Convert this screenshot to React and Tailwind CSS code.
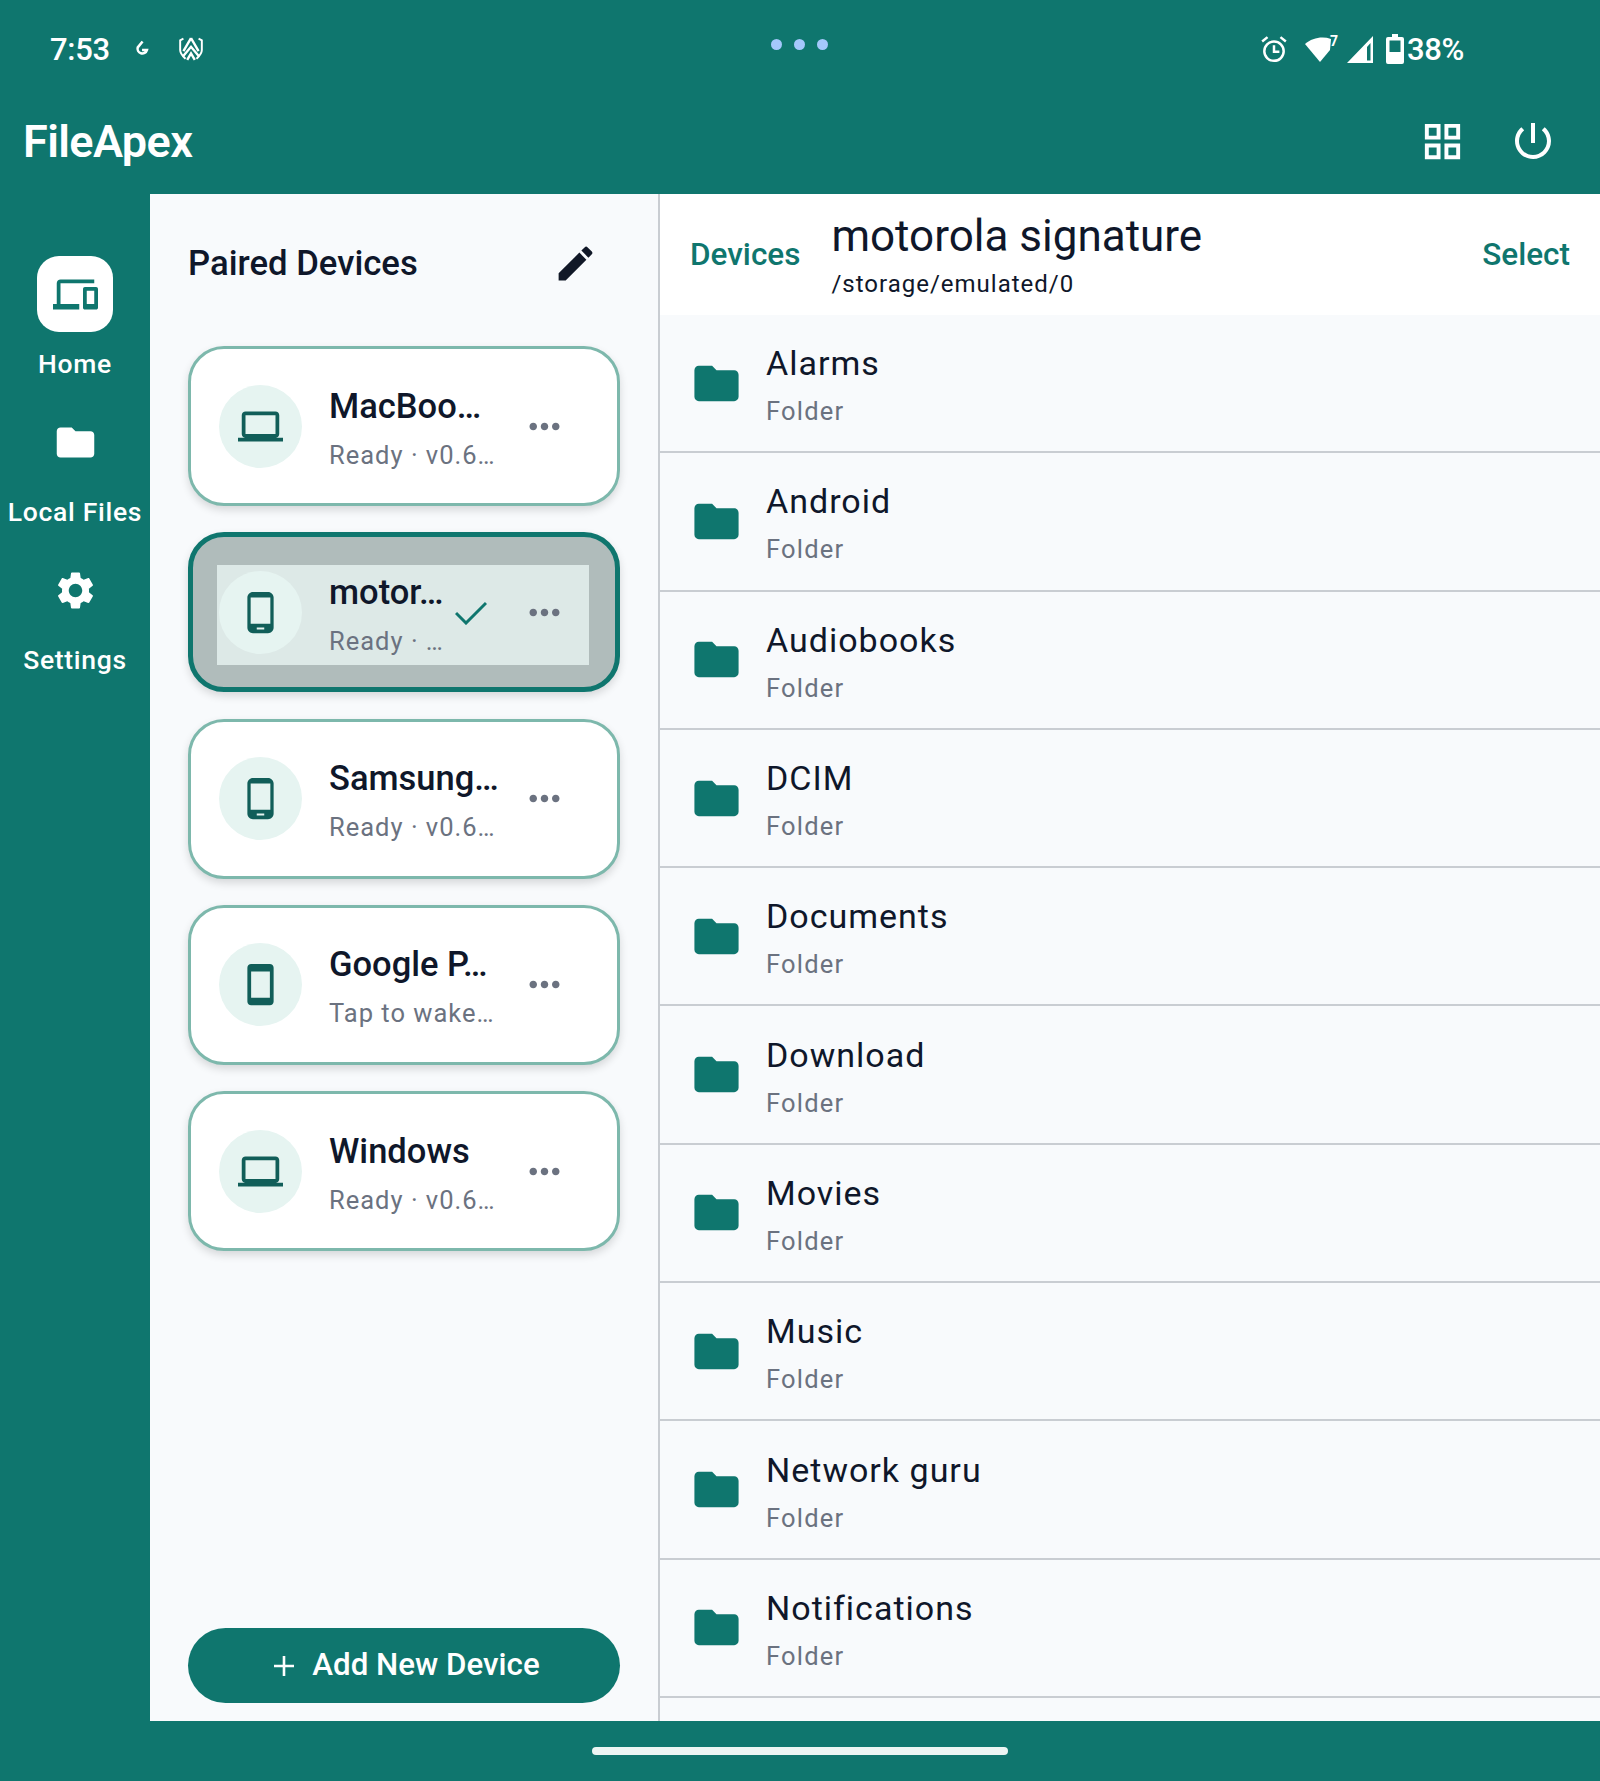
const folderPath = 'M10 4H4c-1.1 0-2 .9-2 2v12c0 1.1.9 2 2 2h16c1.1 0 2-.9 2-2V8c0-1.1-.9-2-2-2h-8l-2-2z';
const laptopPath = 'M20 18c1.1 0 1.99-.9 1.99-2L22 6c0-1.1-.9-2-2-2H4c-1.1 0-2 .9-2 2v10c0 1.1.9 2 2 2H0v2h24v-2h-4zM4 6h16v10H4V6z';
const phonePath = 'M16 1H8C6.34 1 5 2.34 5 4v16c0 1.66 1.34 3 3 3h8c1.66 0 3-1.34 3-3V4c0-1.66-1.34-3-3-3zm-2 20h-4v-1h4v1zm3.25-3H6.75V4h10.5v14z';
const tabletPath = 'M17 1.01 7 1c-1.1 0-2 .9-2 2v18c0 1.1.9 2 2 2h10c1.1 0 2-.9 2-2V3c0-1.1-.9-1.99-2-1.99zM17 19H7V5h10v14z';
const devicesPath = 'M4 6h18V4H4c-1.1 0-2 .9-2 2v11H0v3h14v-3H4V6zm19 2h-6c-.55 0-1 .45-1 1v10c0 .55.45 1 1 1h6c.55 0 1-.45 1-1V9c0-.55-.45-1-1-1zm-1 9h-4v-7h4v7z';
const gearPath = 'M19.14 12.94c.04-.3.06-.61.06-.94 0-.32-.02-.64-.07-.94l2.03-1.58c.18-.14.23-.41.12-.61l-1.92-3.32c-.12-.22-.37-.29-.59-.22l-2.39.96c-.5-.38-1.03-.7-1.62-.94l-.36-2.54c-.04-.24-.24-.41-.48-.41h-3.84c-.24 0-.43.17-.47.41l-.36 2.54c-.59.24-1.13.57-1.62.94l-2.39-.96c-.22-.08-.47 0-.59.22L2.74 8.87c-.12.21-.08.47.12.61l2.03 1.58c-.05.3-.09.63-.09.94s.02.64.07.94l-2.03 1.58c-.18.14-.23.41-.12.61l1.92 3.32c.12.22.37.29.59.22l2.39-.96c.5.38 1.03.7 1.62.94l.36 2.54c.05.24.24.41.48.41h3.84c.24 0 .44-.17.47-.41l.36-2.54c.59-.24 1.13-.56 1.62-.94l2.39.96c.22.08.47 0 .59-.22l1.92-3.32c.12-.22.07-.47-.12-.61l-2.01-1.58zM12 15.6c-1.98 0-3.6-1.62-3.6-3.6s1.62-3.6 3.6-3.6 3.6 1.62 3.6 3.6-1.62 3.6-3.6 3.6z';
const editPath = 'M3 17.25V21h3.75L17.81 9.94l-3.75-3.75L3 17.25zM20.71 7.04c.39-.39.39-1.02 0-1.41l-2.34-2.34c-.39-.39-1.02-.39-1.41 0l-1.83 1.83 3.75 3.75 1.83-1.83z';
const morePath = 'M6 10c-1.1 0-2 .9-2 2s.9 2 2 2 2-.9 2-2-.9-2-2-2zm12 0c-1.1 0-2 .9-2 2s.9 2 2 2 2-.9 2-2-.9-2-2-2zm-6 0c-1.1 0-2 .9-2 2s.9 2 2 2 2-.9 2-2-.9-2-2-2z';
const gridPath = 'M3 3v8h8V3H3zm6 6H5V5h4v4zm-6 4v8h8v-8H3zm6 6H5v-4h4v4zm4-16v8h8V3h-8zm6 6h-4V5h4v4zm-6 4v8h8v-8h-8zm6 6h-4v-4h4v4z';
const powerPath = 'M13 3h-2v10h2V3zm4.83 2.17l-1.42 1.42C17.99 7.86 19 9.81 19 12c0 3.87-3.13 7-7 7s-7-3.13-7-7c0-2.19 1.01-4.14 2.58-5.42L6.17 5.17C4.23 6.82 3 9.26 3 12c0 4.97 4.03 9 9 9s9-4.03 9-9c0-2.74-1.23-5.18-3.17-6.83z';

function Icon({ d, className }) {
  return (
    <svg viewBox="0 0 24 24" fill="currentColor" className={className}>
      <path d={d} />
    </svg>
  );
}

const devices = [
  { name: 'MacBoo…', sub: 'Ready · v0.6…', icon: laptopPath },
  { name: 'motor…', sub: 'Ready · …', icon: phonePath, active: true },
  { name: 'Samsung…', sub: 'Ready · v0.6…', icon: phonePath },
  { name: 'Google P…', sub: 'Tap to wake…', icon: tabletPath },
  { name: 'Windows', sub: 'Ready · v0.6…', icon: laptopPath },
];

const folders = ['Alarms', 'Android', 'Audiobooks', 'DCIM', 'Documents', 'Download', 'Movies', 'Music', 'Network guru', 'Notifications'];

function StatusBar() {
  return (
    <div className="grid h-[94px] grid-cols-3 items-center pt-[4px] text-white">
      <div className="flex items-center pl-[50px]">
        <span className="text-[31px] font-medium leading-none tracking-[-0.3px]">7:53</span>
        <svg viewBox="0 0 14 16" className="ml-[24px] h-[18px] w-[15px]" fill="none" stroke="currentColor" strokeWidth="2.4">
          <path d="M8 1 3.500 6.500A4.400 4.400 0 1 0 12 9H7.500" />
        </svg>
        <svg viewBox="0 0 24 24" className="ml-[29px] h-[26px] w-[26px]" fill="none" stroke="currentColor" strokeWidth="1.8">
          <path d="M5 2.500 2 4v9c0 4 4 7 5 8M19 2.500 22 4v9c0 4-4 7-5 8" />
          <path d="M12 2 5 14M12 2l7 12M4.500 19 12 10l7.500 9M8.500 22 12 16l3.500 6" strokeWidth="2.200" />
        </svg>
      </div>
      <div className="mb-[10px] flex items-center justify-center gap-[12px]">
        <span className="h-[11px] w-[11px] rounded-full bg-[#a4c8fb]" />
        <span className="h-[11px] w-[11px] rounded-full bg-[#a4c8fb]" />
        <span className="h-[11px] w-[11px] rounded-full bg-[#a4c8fb]" />
      </div>
      <div className="flex items-center justify-end pr-[136px]">
        <svg viewBox="0 0 26 26" className="h-[28px] w-[28px]" fill="none" stroke="currentColor" strokeWidth="2.300">
          <circle cx="13" cy="15" r="9" />
          <path d="M13 9.500V15.500H18M2 6 7 2M24 6l-5-4" />
        </svg>
        <div className="relative ml-[17px] h-[28px] w-[33px]">
          <svg viewBox="0 0 33 28" className="h-[28px] w-[33px]" fill="currentColor">
            <path d="M0 9C7 3 17 1 26 4L25 15 15 27Z" />
          </svg>
          <span className="absolute right-[0px] top-[-1px] text-[14px] font-bold leading-none">7</span>
        </div>
        <svg viewBox="0 0 26 27" className="ml-[9px] h-[27px] w-[26px]" fill="currentColor">
          <path d="M26 0V27H0ZM23.500 7 20 11V24.500H23.500Z" fillRule="evenodd" />
        </svg>
        <svg viewBox="0 0 18 30" className="ml-[13px] h-[30px] w-[18px]" fill="currentColor">
          <path d="M6 0h6v3h4a2 2 0 0 1 2 2v23a2 2 0 0 1-2 2H2a2 2 0 0 1-2-2V5a2 2 0 0 1 2-2h4ZM3.500 6.500V18H14.500V6.500Z" fillRule="evenodd" />
        </svg>
        <span className="ml-[3px] text-[31px] font-medium leading-none tracking-[-0.4px]">38%</span>
      </div>
    </div>
  );
}

function NavItem({ icon, label, active }) {
  return (
    <div className="flex h-[148px] flex-col items-center">
      <div className={`flex h-[76px] w-[76px] items-center justify-center rounded-[22px] ${active ? 'bg-white text-[#0f766e]' : 'text-white'}`}>
        <Icon d={icon} className="h-[45px] w-[45px]" />
      </div>
      <div className="mt-[14px] whitespace-nowrap text-[26.500px] font-medium leading-[36px] tracking-[0.7px] text-white">{label}</div>
    </div>
  );
}

function DeviceCard({ device }) {
  return (
    <div className={`flex h-[160px] items-center justify-center rounded-[36px] shadow-[0_4px_8px_rgba(0,0,0,0.14)] ${device.active ? 'border-[5px] border-[#0f766e] bg-[#b0bcbb]' : 'border-[3px] border-[#7db8ac] bg-white'}`}>
      <div className={`mr-[3px] mt-[6px] flex h-[100px] w-[372px] items-center pb-[6px] ${device.active ? 'bg-[#dde9e7]' : ''}`}>
        <div className="ml-[2.500px] flex h-[83px] w-[83px] shrink-0 items-center justify-center rounded-full bg-[#e6f4f1] text-[#115e59]">
          <Icon d={device.icon} className="h-[45px] w-[45px]" />
        </div>
        <div className="ml-[27px] min-w-0 flex-1 whitespace-nowrap pt-[3px]">
          <div className="text-[34.500px] font-[550] leading-[46px] text-[#0f172a]">{device.name}</div>
          <div className="mt-[8px] text-[25.500px] leading-[36px] tracking-[1px] text-[#6b7280]">{device.sub}</div>
        </div>
        {device.active && (
          <svg viewBox="0 0 32 24" fill="none" stroke="#0f766e" strokeWidth="3" className="mr-[-1px] mt-[2px] h-[24px] w-[32px] shrink-0">
            <path d="M1 12 11 22 31 2" />
          </svg>
        )}
        <Icon d={morePath} className="ml-[36px] mr-[21.500px] h-[45px] w-[45px] shrink-0 text-[#6b7280]" />
      </div>
    </div>
  );
}

function FolderRow({ name }) {
  return (
    <div className="flex h-[138.3px] shrink-0 items-center border-b-2 border-[#c9cdd2] pl-[30px]">
      <Icon d={folderPath} className="h-[53px] w-[53px] shrink-0 text-[#0f766e]" />
      <div className="ml-[23px] pt-[4px]">
        <div className="text-[34px] leading-[44px] tracking-[1px] text-[#0f172a]">{name}</div>
        <div className="mt-[8px] text-[25.500px] leading-[36px] tracking-[1.2px] text-[#6b7280]">Folder</div>
      </div>
    </div>
  );
}

export default function App() {
  return (
    <div className="flex h-[1781px] w-[1600px] flex-col overflow-hidden bg-[#0f766e] font-[Roboto,sans-serif]">
      <StatusBar />

      <div className="flex h-[100px] items-center justify-between pb-[6px] text-white">
        <div className="pl-[23px] text-[45px] font-semibold leading-none tracking-[-0.6px]">FileApex</div>
        <div className="flex items-center gap-[43px] pr-[43px]">
          <Icon d={gridPath} className="h-[47px] w-[47px]" />
          <Icon d={powerPath} className="h-[48px] w-[48px]" />
        </div>
      </div>

      <div className="flex min-h-0 flex-1">
        <div className="w-[150px] shrink-0 pt-[62px]">
          <NavItem icon={devicesPath} label="Home" active />
          <NavItem icon={folderPath} label="Local Files" />
          <NavItem icon={gearPath} label="Settings" />
        </div>

        <div className="flex w-[508px] shrink-0 flex-col bg-[#f8fafc] pl-[38px] pr-[38px]">
          <div className="flex h-[152px] shrink-0 items-center justify-between pb-[14px]">
            <div className="text-[34.700px] font-medium text-[#0f172a]">Paired Devices</div>
            <Icon d={editPath} className="mr-[22px] h-[45px] w-[45px] text-[#111827]" />
          </div>
          <div className="flex flex-col gap-[26.300px]">
            {devices.map(d => <DeviceCard key={d.name} device={d} />)}
          </div>
          <div className="mb-[18px] mt-auto flex h-[75px] shrink-0 items-center justify-center rounded-full bg-[#0f766e] pl-[6px] text-white">
            <svg viewBox="0 0 20 20" fill="none" stroke="currentColor" strokeWidth="2.600" className="h-[20px] w-[20px]">
              <path d="M10 0V20M0 10H20" />
            </svg>
            <span className="ml-[18px] text-[31.300px] font-medium">Add New Device</span>
          </div>
        </div>

        <div className="flex min-w-0 flex-1 flex-col border-l-2 border-[#c9cdd2] bg-[#f8fafc]">
          <div className="flex h-[121px] shrink-0 items-center bg-white pl-[30px] pr-[30px]">
            <div className="text-[31.500px] font-medium text-[#0f766e]">Devices</div>
            <div className="ml-[31px] flex-1 pt-[2px]">
              <div className="text-[44px] leading-[50px] text-[#0f172a]">motorola signature</div>
              <div className="mt-[7px] text-[24px] leading-[32px] tracking-[1px] text-[#0f172a]">/storage/emulated/0</div>
            </div>
            <div className="text-[31.500px] font-medium text-[#0f766e]">Select</div>
          </div>
          <div className="flex flex-col">
            {folders.map(f => <FolderRow key={f} name={f} />)}
          </div>
        </div>
      </div>

      <div className="flex h-[60px] shrink-0 items-start justify-center pt-[26px]">
        <div className="h-[8px] w-[416px] rounded-full bg-[#ecf5f3]" />
      </div>
    </div>
  );
}
